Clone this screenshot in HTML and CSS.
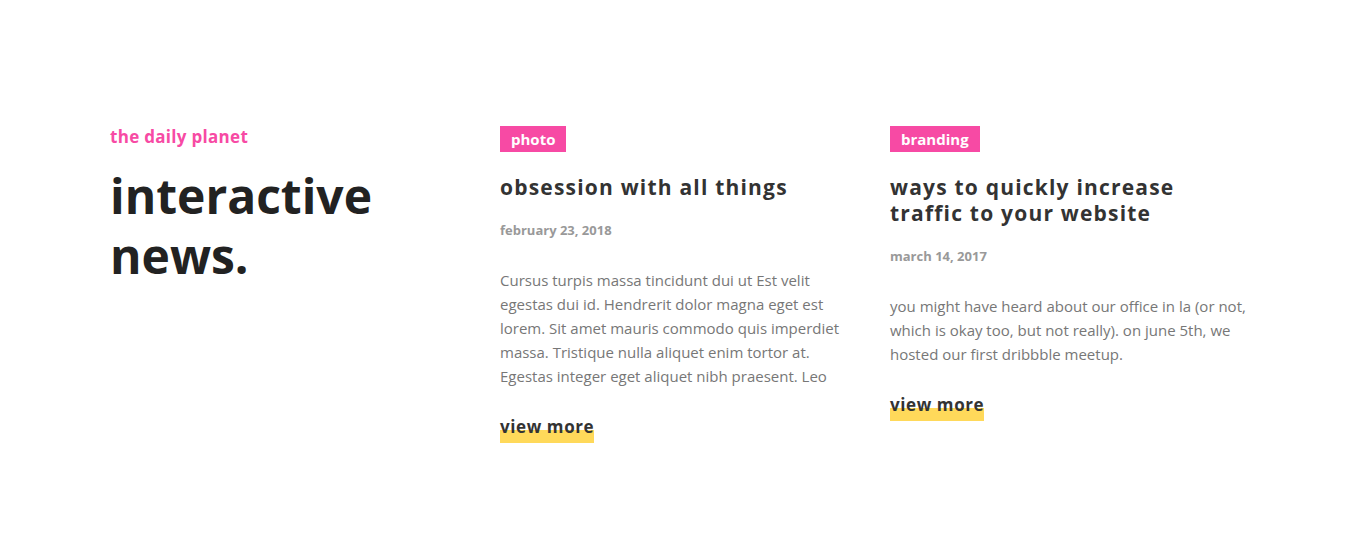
FILE: index.html
```html
<!DOCTYPE html>
<html>
<head>
<meta charset="utf-8">
<link rel="stylesheet" href="styles.css">
</head>
<body>
<section class="news">
  <div class="intro">
    <p class="kicker">the daily planet</p>
    <h1 class="headline">interactive news.</h1>
  </div>
  <article class="card">
    <span class="tag">photo</span>
    <h2 class="title">obsession with all things</h2>
    <p class="date">february 23, 2018</p>
    <p class="text">Cursus turpis massa tincidunt dui ut Est velit egestas dui id. Hendrerit dolor magna eget est lorem. Sit amet mauris commodo quis imperdiet massa. Tristique nulla aliquet enim tortor at. Egestas integer eget aliquet nibh praesent. Leo</p>
    <a class="more" href="#">view more</a>
  </article>
  <article class="card">
    <span class="tag">branding</span>
    <h2 class="title">ways to quickly increase traffic to your website</h2>
    <p class="date">march 14, 2017</p>
    <p class="text">you might have heard about our office in la (or not, which is okay too, but not really). on june 5th, we hosted our first dribbble meetup.</p>
    <a class="more" href="#">view more</a>
  </article>
</section>
</body>
</html>
```

FILE: styles.css
```css
html, body {
  margin: 0;
  padding: 0;
  background: #fff;
}
body {
  font-family: "Open Sans", "Lato", sans-serif;
  color: #333;
}
.news {
  display: grid;
  grid-template-columns: 390px 390px 390px;
  padding: 126px 0 0 110px;
}
.kicker {
  margin: 0;
  color: #f74aa4;
  font-size: 17px;
  font-weight: 700;
  line-height: 22px;
  letter-spacing: 0.3px;
}
.headline {
  margin: 18px 0 0;
  width: 300px;
  font-size: 48px;
  line-height: 60px;
  font-weight: 700;
  color: #222;
}
.card {
  display: flex;
  flex-direction: column;
  align-items: flex-start;
  width: 362px;
}
.tag {
  display: inline-block;
  background: #f74aa4;
  color: #fff;
  font-size: 15px;
  font-weight: 700;
  line-height: 26px;
  padding: 0 11px;
}
.title {
  width: 300px;
  margin: 22px 0 0;
  font-size: 21px;
  line-height: 26px;
  font-weight: 700;
  letter-spacing: 1.2px;
  color: #333;
}
.date {
  margin: 21px 0 0;
  font-size: 13px;
  line-height: 18px;
  font-weight: 700;
  color: #999;
}
.text {
  margin: 29px 0 0;
  font-size: 15px;
  line-height: 24px;
  color: #777;
}
.more {
  margin-top: 28px;
  font-size: 17px;
  line-height: 22px;
  font-weight: 700;
  letter-spacing: 0.6px;
  color: #333;
  text-decoration: none;
  background: linear-gradient(to bottom, transparent 14px, #ffd95a 14px);
  padding-bottom: 5px;
}
```
